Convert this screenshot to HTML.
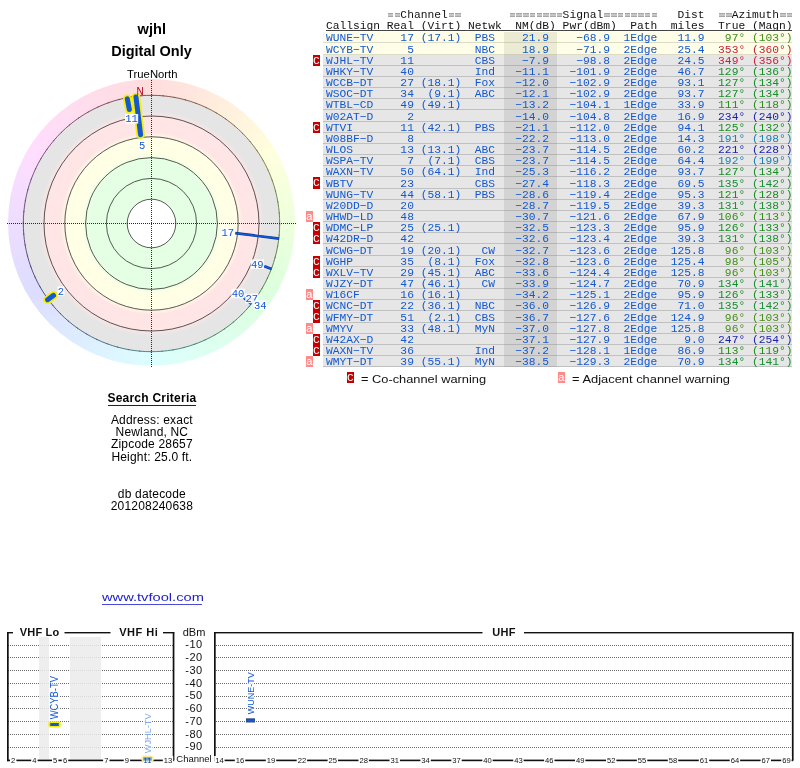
<!DOCTYPE html>
<html><head><meta charset="utf-8"><title>TV Fool</title>
<style>
html,body{margin:0;padding:0;background:#fff;}
body{width:800px;height:768px;position:relative;overflow:hidden;font-family:"Liberation Sans",sans-serif;color:#000;}
.abs{position:absolute;}
.c{position:absolute;text-align:center;white-space:nowrap;left:0;width:303px;}
.m{font-family:"Liberation Mono",monospace;font-size:11.28px;white-space:pre;letter-spacing:0;}
.row{position:absolute;left:323px;width:469px;height:11.19px;}
.t{position:absolute;left:326px;line-height:12px;color:#1358d0;}
.bd{position:absolute;width:7px;height:11px;color:#fff;font-family:"Liberation Mono",monospace;font-size:11.3px;line-height:12px;text-align:center;overflow:hidden;text-indent:-0.2px}
.bC{background:#c40000;left:313px;}
.ba{background:#ff8a8a;left:306px;}
.hd{position:absolute;left:326px;color:#111;line-height:12px;}
.hd i{font-style:normal;color:#999;font-weight:bold;}
</style></head><body><div id="wrap" style="position:absolute;left:0;top:0;width:800px;height:768px;will-change:transform;background:#fff">

<div class="c" style="top:20.2px;font-weight:bold;font-size:14.6px;line-height:18px;left:0.3px">wjhl</div>
<div class="c" style="top:42.2px;font-weight:bold;font-size:14.5px;line-height:18px;">Digital Only</div>
<div class="c" style="top:67.5px;font-size:11.3px;line-height:13px;left:0.8px">TrueNorth</div>
<div class="c" style="top:391px;font-weight:bold;font-size:12px;line-height:14px;letter-spacing:0.24px;left:0.4px">Search Criteria</div>
<div class="abs" style="left:108px;top:405px;width:88px;height:1px;background:#222"></div>
<div class="c" style="top:412.7px;font-size:12px;line-height:14px;letter-spacing:0.18px;left:0.4px">Address: exact</div>
<div class="c" style="top:425.0px;font-size:12px;line-height:14px;letter-spacing:0.18px;left:0.4px">Newland, NC</div>
<div class="c" style="top:437.3px;font-size:12px;line-height:14px;letter-spacing:0.18px;left:0.4px">Zipcode 28657</div>
<div class="c" style="top:449.6px;font-size:12px;line-height:14px;letter-spacing:0.18px;left:0.4px">Height: 25.0 ft.</div>
<div class="c" style="top:487px;font-size:12px;line-height:14px;letter-spacing:0.18px;left:0.4px">db datecode</div>
<div class="c" style="top:499.3px;font-size:12px;line-height:14px;letter-spacing:0.18px;left:0.4px">201208240638</div>
<div class="abs" style="left:102.2px;top:590.2px;font-size:11.5px;line-height:14px;color:#2020cc;white-space:nowrap;transform:scaleX(1.275);transform-origin:0 0;">www.tvfool.com</div>
<div class="abs" style="left:102px;top:604px;width:100px;height:1px;background:#4a4ad8"></div>
<div class="abs" style="left:7.9px;top:79.1px;width:287.2px;height:287.2px;border-radius:50%;background:conic-gradient(from 0deg,rgb(255,221,221) 0deg,rgb(255,229,221) 15deg,rgb(255,238,221) 30deg,rgb(255,246,221) 45deg,rgb(255,255,221) 60deg,rgb(246,255,221) 75deg,rgb(238,255,221) 90deg,rgb(229,255,221) 105deg,rgb(221,255,221) 120deg,rgb(221,255,229) 135deg,rgb(221,255,238) 150deg,rgb(221,255,246) 165deg,rgb(221,255,255) 180deg,rgb(221,246,255) 195deg,rgb(221,238,255) 210deg,rgb(221,229,255) 225deg,rgb(221,221,255) 240deg,rgb(229,221,255) 255deg,rgb(238,221,255) 270deg,rgb(246,221,255) 285deg,rgb(255,221,255) 300deg,rgb(255,221,246) 315deg,rgb(255,221,238) 330deg,rgb(255,221,229) 345deg,rgb(255,221,221) 360deg);"></div>
<div class="abs" style="left:23.0px;top:95.0px;width:257.0px;height:257.0px;border-radius:50%;background:radial-gradient(circle closest-side,#fff 0,#fff 24.3px,#e5ffe5 24.4px,#e5ffe5 63.5px,#f2ffe5 66.7px,#ffffe5 70px,#ffffe5 85.5px,#fff2e5 88.2px,#ffe5e5 91px,#ffe5e5 106.5px,#f2e5e5 109.5px,#e5e5e5 112.5px,#e5e5e5 100%);"></div>
<svg class="abs" style="left:0;top:0" width="320" height="385" viewBox="0 0 320 385">
<path d="M151.50 95.30A128.2 128.2 0 0 1 164.01 95.91" fill="none" stroke="rgb(127,66,63)" stroke-width="0.9"/>
<path d="M162.67 95.79A128.2 128.2 0 0 1 175.08 97.49" fill="none" stroke="rgb(127,72,63)" stroke-width="0.9"/>
<path d="M173.76 97.25A128.2 128.2 0 0 1 185.98 100.02" fill="none" stroke="rgb(127,77,63)" stroke-width="0.9"/>
<path d="M184.68 99.67A128.2 128.2 0 0 1 196.61 103.50" fill="none" stroke="rgb(127,82,63)" stroke-width="0.9"/>
<path d="M195.35 103.03A128.2 128.2 0 0 1 206.89 107.89" fill="none" stroke="rgb(127,87,63)" stroke-width="0.9"/>
<path d="M205.68 107.31A128.2 128.2 0 0 1 216.76 113.15" fill="none" stroke="rgb(127,93,63)" stroke-width="0.9"/>
<path d="M215.60 112.48A128.2 128.2 0 0 1 226.13 119.26" fill="none" stroke="rgb(127,98,63)" stroke-width="0.9"/>
<path d="M225.03 118.48A128.2 128.2 0 0 1 234.93 126.16" fill="none" stroke="rgb(127,103,63)" stroke-width="0.9"/>
<path d="M233.91 125.29A128.2 128.2 0 0 1 243.10 133.80" fill="none" stroke="rgb(127,109,63)" stroke-width="0.9"/>
<path d="M242.15 132.85A128.2 128.2 0 0 1 250.56 142.13" fill="none" stroke="rgb(127,114,63)" stroke-width="0.9"/>
<path d="M249.71 141.09A128.2 128.2 0 0 1 257.28 151.07" fill="none" stroke="rgb(127,119,63)" stroke-width="0.9"/>
<path d="M256.52 149.97A128.2 128.2 0 0 1 263.19 160.57" fill="none" stroke="rgb(127,125,63)" stroke-width="0.9"/>
<path d="M262.52 159.40A128.2 128.2 0 0 1 268.25 170.54" fill="none" stroke="rgb(124,127,63)" stroke-width="0.9"/>
<path d="M267.69 169.32A128.2 128.2 0 0 1 272.42 180.92" fill="none" stroke="rgb(119,127,63)" stroke-width="0.9"/>
<path d="M271.97 179.65A128.2 128.2 0 0 1 275.67 191.62" fill="none" stroke="rgb(113,127,63)" stroke-width="0.9"/>
<path d="M275.33 190.32A128.2 128.2 0 0 1 277.98 202.56" fill="none" stroke="rgb(108,127,63)" stroke-width="0.9"/>
<path d="M277.75 201.24A128.2 128.2 0 0 1 279.32 213.66" fill="none" stroke="rgb(103,127,63)" stroke-width="0.9"/>
<path d="M279.21 212.33A128.2 128.2 0 0 1 279.69 224.84" fill="none" stroke="rgb(97,127,63)" stroke-width="0.9"/>
<path d="M279.70 223.50A128.2 128.2 0 0 1 279.09 236.01" fill="none" stroke="rgb(92,127,63)" stroke-width="0.9"/>
<path d="M279.21 234.67A128.2 128.2 0 0 1 277.51 247.08" fill="none" stroke="rgb(87,127,63)" stroke-width="0.9"/>
<path d="M277.75 245.76A128.2 128.2 0 0 1 274.98 257.98" fill="none" stroke="rgb(82,127,63)" stroke-width="0.9"/>
<path d="M275.33 256.68A128.2 128.2 0 0 1 271.50 268.61" fill="none" stroke="rgb(76,127,63)" stroke-width="0.9"/>
<path d="M271.97 267.35A128.2 128.2 0 0 1 267.11 278.89" fill="none" stroke="rgb(71,127,63)" stroke-width="0.9"/>
<path d="M267.69 277.68A128.2 128.2 0 0 1 261.85 288.76" fill="none" stroke="rgb(66,127,63)" stroke-width="0.9"/>
<path d="M262.52 287.60A128.2 128.2 0 0 1 255.74 298.13" fill="none" stroke="rgb(63,127,66)" stroke-width="0.9"/>
<path d="M256.52 297.03A128.2 128.2 0 0 1 248.84 306.93" fill="none" stroke="rgb(63,127,72)" stroke-width="0.9"/>
<path d="M249.71 305.91A128.2 128.2 0 0 1 241.20 315.10" fill="none" stroke="rgb(63,127,77)" stroke-width="0.9"/>
<path d="M242.15 314.15A128.2 128.2 0 0 1 232.87 322.56" fill="none" stroke="rgb(63,127,82)" stroke-width="0.9"/>
<path d="M233.91 321.71A128.2 128.2 0 0 1 223.93 329.28" fill="none" stroke="rgb(63,127,87)" stroke-width="0.9"/>
<path d="M225.03 328.52A128.2 128.2 0 0 1 214.43 335.19" fill="none" stroke="rgb(63,127,93)" stroke-width="0.9"/>
<path d="M215.60 334.52A128.2 128.2 0 0 1 204.46 340.25" fill="none" stroke="rgb(63,127,98)" stroke-width="0.9"/>
<path d="M205.68 339.69A128.2 128.2 0 0 1 194.08 344.42" fill="none" stroke="rgb(63,127,103)" stroke-width="0.9"/>
<path d="M195.35 343.97A128.2 128.2 0 0 1 183.38 347.67" fill="none" stroke="rgb(63,127,109)" stroke-width="0.9"/>
<path d="M184.68 347.33A128.2 128.2 0 0 1 172.44 349.98" fill="none" stroke="rgb(63,127,114)" stroke-width="0.9"/>
<path d="M173.76 349.75A128.2 128.2 0 0 1 161.34 351.32" fill="none" stroke="rgb(63,127,119)" stroke-width="0.9"/>
<path d="M162.67 351.21A128.2 128.2 0 0 1 150.16 351.69" fill="none" stroke="rgb(63,127,125)" stroke-width="0.9"/>
<path d="M151.50 351.70A128.2 128.2 0 0 1 138.99 351.09" fill="none" stroke="rgb(63,124,127)" stroke-width="0.9"/>
<path d="M140.33 351.21A128.2 128.2 0 0 1 127.92 349.51" fill="none" stroke="rgb(63,119,127)" stroke-width="0.9"/>
<path d="M129.24 349.75A128.2 128.2 0 0 1 117.02 346.98" fill="none" stroke="rgb(63,113,127)" stroke-width="0.9"/>
<path d="M118.32 347.33A128.2 128.2 0 0 1 106.39 343.50" fill="none" stroke="rgb(63,108,127)" stroke-width="0.9"/>
<path d="M107.65 343.97A128.2 128.2 0 0 1 96.11 339.11" fill="none" stroke="rgb(63,103,127)" stroke-width="0.9"/>
<path d="M97.32 339.69A128.2 128.2 0 0 1 86.24 333.85" fill="none" stroke="rgb(63,97,127)" stroke-width="0.9"/>
<path d="M87.40 334.52A128.2 128.2 0 0 1 76.87 327.74" fill="none" stroke="rgb(63,92,127)" stroke-width="0.9"/>
<path d="M77.97 328.52A128.2 128.2 0 0 1 68.07 320.84" fill="none" stroke="rgb(63,87,127)" stroke-width="0.9"/>
<path d="M69.09 321.71A128.2 128.2 0 0 1 59.90 313.20" fill="none" stroke="rgb(63,82,127)" stroke-width="0.9"/>
<path d="M60.85 314.15A128.2 128.2 0 0 1 52.44 304.87" fill="none" stroke="rgb(63,76,127)" stroke-width="0.9"/>
<path d="M53.29 305.91A128.2 128.2 0 0 1 45.72 295.93" fill="none" stroke="rgb(63,71,127)" stroke-width="0.9"/>
<path d="M46.48 297.03A128.2 128.2 0 0 1 39.81 286.43" fill="none" stroke="rgb(63,66,127)" stroke-width="0.9"/>
<path d="M40.48 287.60A128.2 128.2 0 0 1 34.75 276.46" fill="none" stroke="rgb(66,63,127)" stroke-width="0.9"/>
<path d="M35.31 277.68A128.2 128.2 0 0 1 30.58 266.08" fill="none" stroke="rgb(72,63,127)" stroke-width="0.9"/>
<path d="M31.03 267.35A128.2 128.2 0 0 1 27.33 255.38" fill="none" stroke="rgb(77,63,127)" stroke-width="0.9"/>
<path d="M27.67 256.68A128.2 128.2 0 0 1 25.02 244.44" fill="none" stroke="rgb(82,63,127)" stroke-width="0.9"/>
<path d="M25.25 245.76A128.2 128.2 0 0 1 23.68 233.34" fill="none" stroke="rgb(87,63,127)" stroke-width="0.9"/>
<path d="M23.79 234.67A128.2 128.2 0 0 1 23.31 222.16" fill="none" stroke="rgb(93,63,127)" stroke-width="0.9"/>
<path d="M23.30 223.50A128.2 128.2 0 0 1 23.91 210.99" fill="none" stroke="rgb(98,63,127)" stroke-width="0.9"/>
<path d="M23.79 212.33A128.2 128.2 0 0 1 25.49 199.92" fill="none" stroke="rgb(103,63,127)" stroke-width="0.9"/>
<path d="M25.25 201.24A128.2 128.2 0 0 1 28.02 189.02" fill="none" stroke="rgb(109,63,127)" stroke-width="0.9"/>
<path d="M27.67 190.32A128.2 128.2 0 0 1 31.50 178.39" fill="none" stroke="rgb(114,63,127)" stroke-width="0.9"/>
<path d="M31.03 179.65A128.2 128.2 0 0 1 35.89 168.11" fill="none" stroke="rgb(119,63,127)" stroke-width="0.9"/>
<path d="M35.31 169.32A128.2 128.2 0 0 1 41.15 158.24" fill="none" stroke="rgb(125,63,127)" stroke-width="0.9"/>
<path d="M40.48 159.40A128.2 128.2 0 0 1 47.26 148.87" fill="none" stroke="rgb(127,63,124)" stroke-width="0.9"/>
<path d="M46.48 149.97A128.2 128.2 0 0 1 54.16 140.07" fill="none" stroke="rgb(127,63,119)" stroke-width="0.9"/>
<path d="M53.29 141.09A128.2 128.2 0 0 1 61.80 131.90" fill="none" stroke="rgb(127,63,113)" stroke-width="0.9"/>
<path d="M60.85 132.85A128.2 128.2 0 0 1 70.13 124.44" fill="none" stroke="rgb(127,63,108)" stroke-width="0.9"/>
<path d="M69.09 125.29A128.2 128.2 0 0 1 79.07 117.72" fill="none" stroke="rgb(127,63,103)" stroke-width="0.9"/>
<path d="M77.97 118.48A128.2 128.2 0 0 1 88.57 111.81" fill="none" stroke="rgb(127,63,97)" stroke-width="0.9"/>
<path d="M87.40 112.48A128.2 128.2 0 0 1 98.54 106.75" fill="none" stroke="rgb(127,63,92)" stroke-width="0.9"/>
<path d="M97.32 107.31A128.2 128.2 0 0 1 108.92 102.58" fill="none" stroke="rgb(127,63,87)" stroke-width="0.9"/>
<path d="M107.65 103.03A128.2 128.2 0 0 1 119.62 99.33" fill="none" stroke="rgb(127,63,82)" stroke-width="0.9"/>
<path d="M118.32 99.67A128.2 128.2 0 0 1 130.56 97.02" fill="none" stroke="rgb(127,63,76)" stroke-width="0.9"/>
<path d="M129.24 97.25A128.2 128.2 0 0 1 141.66 95.68" fill="none" stroke="rgb(127,63,71)" stroke-width="0.9"/>
<path d="M140.33 95.79A128.2 128.2 0 0 1 152.84 95.31" fill="none" stroke="rgb(127,63,66)" stroke-width="0.9"/>
<circle cx="151.5" cy="223.5" r="24.3" fill="none" stroke="#222" stroke-width="0.75"/>
<circle cx="151.5" cy="223.5" r="45.1" fill="none" stroke="#222" stroke-width="0.75"/>
<circle cx="151.5" cy="223.5" r="65.9" fill="none" stroke="#222" stroke-width="0.75"/>
<circle cx="151.5" cy="223.5" r="86.7" fill="none" stroke="#222" stroke-width="0.75"/>
<circle cx="151.5" cy="223.5" r="107.5" fill="none" stroke="#222" stroke-width="0.75"/>
<line x1="7" y1="223.5" x2="296" y2="223.5" stroke="#2a2a2a" stroke-width="1" stroke-dasharray="1 1" shape-rendering="crispEdges"/>
<line x1="151.5" y1="80" x2="151.5" y2="367" stroke="#2a2a2a" stroke-width="1" stroke-dasharray="1 1" shape-rendering="crispEdges"/>
<line x1="279.14" y1="238.57" x2="235.29" y2="233.19" stroke="#0a3a9a" stroke-width="2.7"/>
<line x1="279.14" y1="238.57" x2="235.29" y2="233.19" stroke="#1458d6" stroke-width="1.6"/>
<line x1="251.44" y1="303.83" x2="243.78" y2="297.63" stroke="#0a3a9a" stroke-width="2.7"/>
<line x1="251.44" y1="303.83" x2="243.78" y2="297.63" stroke="#1458d6" stroke-width="1.6"/>
<line x1="254.20" y1="300.29" x2="247.08" y2="294.93" stroke="#0a3a9a" stroke-width="2.7"/>
<line x1="254.20" y1="300.29" x2="247.08" y2="294.93" stroke="#1458d6" stroke-width="1.6"/>
<line x1="254.20" y1="300.29" x2="247.16" y2="294.99" stroke="#0a3a9a" stroke-width="2.7"/>
<line x1="254.20" y1="300.29" x2="247.16" y2="294.99" stroke="#1458d6" stroke-width="1.6"/>
<line x1="271.56" y1="268.99" x2="264.40" y2="266.24" stroke="#0a3a9a" stroke-width="2.7"/>
<line x1="271.56" y1="268.99" x2="264.40" y2="266.24" stroke="#1458d6" stroke-width="1.6"/>
<line x1="135.96" y1="96.95" x2="140.59" y2="134.67" stroke="#f6ee00" stroke-width="8.6" stroke-linecap="round"/>
<line x1="127.27" y1="98.83" x2="129.35" y2="109.53" stroke="#f6ee00" stroke-width="8.6" stroke-linecap="round"/>
<line x1="47.62" y1="299.67" x2="53.53" y2="295.38" stroke="#f6ee00" stroke-width="8.6" stroke-linecap="round"/>
<line x1="135.96" y1="96.95" x2="140.59" y2="134.67" stroke="#1458d6" stroke-width="5" stroke-linecap="round"/>
<line x1="127.27" y1="98.83" x2="129.35" y2="109.53" stroke="#1458d6" stroke-width="5" stroke-linecap="round"/>
<line x1="47.62" y1="299.67" x2="53.53" y2="295.38" stroke="#1458d6" stroke-width="5" stroke-linecap="round"/>
<rect x="221.1" y="227.4" width="13.2" height="9.6" fill="#fff" fill-opacity="0.92"/><text x="227.7" y="235.6" text-anchor="middle" font-family="Liberation Mono" font-size="10.5" fill="#1458d6">17</text>
<rect x="250.7" y="259.4" width="13.2" height="9.6" fill="#fff" fill-opacity="0.92"/><text x="257.3" y="267.6" text-anchor="middle" font-family="Liberation Mono" font-size="10.5" fill="#1458d6">49</text>
<rect x="231.4" y="288.7" width="13.2" height="9.6" fill="#fff" fill-opacity="0.92"/><text x="238.0" y="296.9" text-anchor="middle" font-family="Liberation Mono" font-size="10.5" fill="#1458d6">40</text>
<rect x="245.2" y="293.6" width="13.2" height="9.6" fill="#fff" fill-opacity="0.92"/><text x="251.8" y="301.8" text-anchor="middle" font-family="Liberation Mono" font-size="10.5" fill="#1458d6">27</text>
<rect x="253.6" y="300.4" width="13.2" height="9.6" fill="#fff" fill-opacity="0.92"/><text x="260.2" y="308.6" text-anchor="middle" font-family="Liberation Mono" font-size="10.5" fill="#1458d6">34</text>
<rect x="125.0" y="114.0" width="13.2" height="9.6" fill="#fff" fill-opacity="0.92"/><text x="131.6" y="122.2" text-anchor="middle" font-family="Liberation Mono" font-size="10.5" fill="#1458d6">11</text>
<rect x="138.6" y="141.0" width="6.9" height="9.6" fill="#fff" fill-opacity="0.92"/><text x="142.1" y="149.2" text-anchor="middle" font-family="Liberation Mono" font-size="10.5" fill="#1458d6">5</text>
<rect x="57.5" y="286.4" width="6.9" height="9.6" fill="#fff" fill-opacity="0.92"/><text x="60.9" y="294.6" text-anchor="middle" font-family="Liberation Mono" font-size="10.5" fill="#1458d6">2</text>
<text x="140" y="94.6" text-anchor="middle" font-family="Liberation Sans" font-size="10px" fill="#b0001a">N</text>
</svg>
<div class="abs" style="left:387.78px;top:13px;width:5.5px;height:4px;background:linear-gradient(#a6a6a6 0,#a6a6a6 1px,#c6c6c6 1px,#c6c6c6 3px,#a6a6a6 3px)"></div>
<div class="abs" style="left:394.55px;top:13px;width:5.5px;height:4px;background:linear-gradient(#a6a6a6 0,#a6a6a6 1px,#c6c6c6 1px,#c6c6c6 3px,#a6a6a6 3px)"></div>
<div class="abs" style="left:448.67px;top:13px;width:5.5px;height:4px;background:linear-gradient(#a6a6a6 0,#a6a6a6 1px,#c6c6c6 1px,#c6c6c6 3px,#a6a6a6 3px)"></div>
<div class="abs" style="left:455.43px;top:13px;width:5.5px;height:4px;background:linear-gradient(#a6a6a6 0,#a6a6a6 1px,#c6c6c6 1px,#c6c6c6 3px,#a6a6a6 3px)"></div>
<div class="abs" style="left:509.55px;top:13px;width:5.5px;height:4px;background:linear-gradient(#a6a6a6 0,#a6a6a6 1px,#c6c6c6 1px,#c6c6c6 3px,#a6a6a6 3px)"></div>
<div class="abs" style="left:516.32px;top:13px;width:5.5px;height:4px;background:linear-gradient(#a6a6a6 0,#a6a6a6 1px,#c6c6c6 1px,#c6c6c6 3px,#a6a6a6 3px)"></div>
<div class="abs" style="left:523.08px;top:13px;width:5.5px;height:4px;background:linear-gradient(#a6a6a6 0,#a6a6a6 1px,#c6c6c6 1px,#c6c6c6 3px,#a6a6a6 3px)"></div>
<div class="abs" style="left:529.85px;top:13px;width:5.5px;height:4px;background:linear-gradient(#a6a6a6 0,#a6a6a6 1px,#c6c6c6 1px,#c6c6c6 3px,#a6a6a6 3px)"></div>
<div class="abs" style="left:536.62px;top:13px;width:5.5px;height:4px;background:linear-gradient(#a6a6a6 0,#a6a6a6 1px,#c6c6c6 1px,#c6c6c6 3px,#a6a6a6 3px)"></div>
<div class="abs" style="left:543.38px;top:13px;width:5.5px;height:4px;background:linear-gradient(#a6a6a6 0,#a6a6a6 1px,#c6c6c6 1px,#c6c6c6 3px,#a6a6a6 3px)"></div>
<div class="abs" style="left:550.14px;top:13px;width:5.5px;height:4px;background:linear-gradient(#a6a6a6 0,#a6a6a6 1px,#c6c6c6 1px,#c6c6c6 3px,#a6a6a6 3px)"></div>
<div class="abs" style="left:556.91px;top:13px;width:5.5px;height:4px;background:linear-gradient(#a6a6a6 0,#a6a6a6 1px,#c6c6c6 1px,#c6c6c6 3px,#a6a6a6 3px)"></div>
<div class="abs" style="left:604.26px;top:13px;width:5.5px;height:4px;background:linear-gradient(#a6a6a6 0,#a6a6a6 1px,#c6c6c6 1px,#c6c6c6 3px,#a6a6a6 3px)"></div>
<div class="abs" style="left:611.03px;top:13px;width:5.5px;height:4px;background:linear-gradient(#a6a6a6 0,#a6a6a6 1px,#c6c6c6 1px,#c6c6c6 3px,#a6a6a6 3px)"></div>
<div class="abs" style="left:617.79px;top:13px;width:5.5px;height:4px;background:linear-gradient(#a6a6a6 0,#a6a6a6 1px,#c6c6c6 1px,#c6c6c6 3px,#a6a6a6 3px)"></div>
<div class="abs" style="left:624.56px;top:13px;width:5.5px;height:4px;background:linear-gradient(#a6a6a6 0,#a6a6a6 1px,#c6c6c6 1px,#c6c6c6 3px,#a6a6a6 3px)"></div>
<div class="abs" style="left:631.32px;top:13px;width:5.5px;height:4px;background:linear-gradient(#a6a6a6 0,#a6a6a6 1px,#c6c6c6 1px,#c6c6c6 3px,#a6a6a6 3px)"></div>
<div class="abs" style="left:638.09px;top:13px;width:5.5px;height:4px;background:linear-gradient(#a6a6a6 0,#a6a6a6 1px,#c6c6c6 1px,#c6c6c6 3px,#a6a6a6 3px)"></div>
<div class="abs" style="left:644.85px;top:13px;width:5.5px;height:4px;background:linear-gradient(#a6a6a6 0,#a6a6a6 1px,#c6c6c6 1px,#c6c6c6 3px,#a6a6a6 3px)"></div>
<div class="abs" style="left:651.62px;top:13px;width:5.5px;height:4px;background:linear-gradient(#a6a6a6 0,#a6a6a6 1px,#c6c6c6 1px,#c6c6c6 3px,#a6a6a6 3px)"></div>
<div class="abs" style="left:719.27px;top:13px;width:5.5px;height:4px;background:linear-gradient(#a6a6a6 0,#a6a6a6 1px,#c6c6c6 1px,#c6c6c6 3px,#a6a6a6 3px)"></div>
<div class="abs" style="left:726.03px;top:13px;width:5.5px;height:4px;background:linear-gradient(#a6a6a6 0,#a6a6a6 1px,#c6c6c6 1px,#c6c6c6 3px,#a6a6a6 3px)"></div>
<div class="abs" style="left:780.15px;top:13px;width:5.5px;height:4px;background:linear-gradient(#a6a6a6 0,#a6a6a6 1px,#c6c6c6 1px,#c6c6c6 3px,#a6a6a6 3px)"></div>
<div class="abs" style="left:786.92px;top:13px;width:5.5px;height:4px;background:linear-gradient(#a6a6a6 0,#a6a6a6 1px,#c6c6c6 1px,#c6c6c6 3px,#a6a6a6 3px)"></div>
<div class="hd m" style="top:9.4px">           Channel                 Signal           Dist    Azimuth  </div>
<div class="hd m" style="top:19.6px">Callsign Real (Virt) Netwk  NM(dB) Pwr(dBm)  Path  miles  True (Magn)</div>
<div class="abs" style="left:326px;top:30px;width:466px;height:1px;background:#444"></div>
<div class="row" style="top:32px;height:11px;background:linear-gradient(90deg,#fdfde8 181px,#ebebd3 181px,#ebebd3 234.5px,#fdfde8 234.5px);"><div class="abs" style="left:0;right:0;bottom:0;height:1px;background:linear-gradient(90deg,#dcdcc4 181px,#cfcfb8 181px,#cfcfb8 234.5px,#dcdcc4 234.5px)"></div></div>
<div class="row" style="top:43px;height:12px;background:linear-gradient(90deg,#fdfde8 181px,#ebebd3 181px,#ebebd3 234.5px,#fdfde8 234.5px);"><div class="abs" style="left:0;right:0;bottom:0;height:1px;background:linear-gradient(90deg,#dcdcc4 181px,#cfcfb8 181px,#cfcfb8 234.5px,#dcdcc4 234.5px)"></div></div>
<div class="row" style="top:55px;height:11px;background:linear-gradient(90deg,#e6e6e6 181px,#d3d3d3 181px,#d3d3d3 234.5px,#e6e6e6 234.5px);"><div class="abs" style="left:0;right:0;bottom:0;height:1px;background:linear-gradient(90deg,#c0c0c0 181px,#b4b4b4 181px,#b4b4b4 234.5px,#c0c0c0 234.5px)"></div></div>
<div class="bd bC" style="top:55px;height:11px">C</div>
<div class="row" style="top:66px;height:11px;background:linear-gradient(90deg,#e6e6e6 181px,#d3d3d3 181px,#d3d3d3 234.5px,#e6e6e6 234.5px);"><div class="abs" style="left:0;right:0;bottom:0;height:1px;background:linear-gradient(90deg,#c0c0c0 181px,#b4b4b4 181px,#b4b4b4 234.5px,#c0c0c0 234.5px)"></div></div>
<div class="row" style="top:77px;height:11px;background:linear-gradient(90deg,#e6e6e6 181px,#d3d3d3 181px,#d3d3d3 234.5px,#e6e6e6 234.5px);"><div class="abs" style="left:0;right:0;bottom:0;height:1px;background:linear-gradient(90deg,#c0c0c0 181px,#b4b4b4 181px,#b4b4b4 234.5px,#c0c0c0 234.5px)"></div></div>
<div class="row" style="top:88px;height:11px;background:linear-gradient(90deg,#e6e6e6 181px,#d3d3d3 181px,#d3d3d3 234.5px,#e6e6e6 234.5px);"><div class="abs" style="left:0;right:0;bottom:0;height:1px;background:linear-gradient(90deg,#c0c0c0 181px,#b4b4b4 181px,#b4b4b4 234.5px,#c0c0c0 234.5px)"></div></div>
<div class="row" style="top:99px;height:11px;background:linear-gradient(90deg,#e6e6e6 181px,#d3d3d3 181px,#d3d3d3 234.5px,#e6e6e6 234.5px);"><div class="abs" style="left:0;right:0;bottom:0;height:1px;background:linear-gradient(90deg,#c0c0c0 181px,#b4b4b4 181px,#b4b4b4 234.5px,#c0c0c0 234.5px)"></div></div>
<div class="row" style="top:110px;height:12px;background:linear-gradient(90deg,#e6e6e6 181px,#d3d3d3 181px,#d3d3d3 234.5px,#e6e6e6 234.5px);"><div class="abs" style="left:0;right:0;bottom:0;height:1px;background:linear-gradient(90deg,#c0c0c0 181px,#b4b4b4 181px,#b4b4b4 234.5px,#c0c0c0 234.5px)"></div></div>
<div class="row" style="top:122px;height:11px;background:linear-gradient(90deg,#e6e6e6 181px,#d3d3d3 181px,#d3d3d3 234.5px,#e6e6e6 234.5px);"><div class="abs" style="left:0;right:0;bottom:0;height:1px;background:linear-gradient(90deg,#c0c0c0 181px,#b4b4b4 181px,#b4b4b4 234.5px,#c0c0c0 234.5px)"></div></div>
<div class="bd bC" style="top:122px;height:11px">C</div>
<div class="row" style="top:133px;height:11px;background:linear-gradient(90deg,#e6e6e6 181px,#d3d3d3 181px,#d3d3d3 234.5px,#e6e6e6 234.5px);"><div class="abs" style="left:0;right:0;bottom:0;height:1px;background:linear-gradient(90deg,#c0c0c0 181px,#b4b4b4 181px,#b4b4b4 234.5px,#c0c0c0 234.5px)"></div></div>
<div class="row" style="top:144px;height:11px;background:linear-gradient(90deg,#e6e6e6 181px,#d3d3d3 181px,#d3d3d3 234.5px,#e6e6e6 234.5px);"><div class="abs" style="left:0;right:0;bottom:0;height:1px;background:linear-gradient(90deg,#c0c0c0 181px,#b4b4b4 181px,#b4b4b4 234.5px,#c0c0c0 234.5px)"></div></div>
<div class="row" style="top:155px;height:11px;background:linear-gradient(90deg,#e6e6e6 181px,#d3d3d3 181px,#d3d3d3 234.5px,#e6e6e6 234.5px);"><div class="abs" style="left:0;right:0;bottom:0;height:1px;background:linear-gradient(90deg,#c0c0c0 181px,#b4b4b4 181px,#b4b4b4 234.5px,#c0c0c0 234.5px)"></div></div>
<div class="row" style="top:166px;height:11px;background:linear-gradient(90deg,#e6e6e6 181px,#d3d3d3 181px,#d3d3d3 234.5px,#e6e6e6 234.5px);"><div class="abs" style="left:0;right:0;bottom:0;height:1px;background:linear-gradient(90deg,#c0c0c0 181px,#b4b4b4 181px,#b4b4b4 234.5px,#c0c0c0 234.5px)"></div></div>
<div class="row" style="top:177px;height:12px;background:linear-gradient(90deg,#e6e6e6 181px,#d3d3d3 181px,#d3d3d3 234.5px,#e6e6e6 234.5px);"><div class="abs" style="left:0;right:0;bottom:0;height:1px;background:linear-gradient(90deg,#c0c0c0 181px,#b4b4b4 181px,#b4b4b4 234.5px,#c0c0c0 234.5px)"></div></div>
<div class="bd bC" style="top:177px;height:12px">C</div>
<div class="row" style="top:189px;height:11px;background:linear-gradient(90deg,#e6e6e6 181px,#d3d3d3 181px,#d3d3d3 234.5px,#e6e6e6 234.5px);"><div class="abs" style="left:0;right:0;bottom:0;height:1px;background:linear-gradient(90deg,#c0c0c0 181px,#b4b4b4 181px,#b4b4b4 234.5px,#c0c0c0 234.5px)"></div></div>
<div class="row" style="top:200px;height:11px;background:linear-gradient(90deg,#e6e6e6 181px,#d3d3d3 181px,#d3d3d3 234.5px,#e6e6e6 234.5px);"><div class="abs" style="left:0;right:0;bottom:0;height:1px;background:linear-gradient(90deg,#c0c0c0 181px,#b4b4b4 181px,#b4b4b4 234.5px,#c0c0c0 234.5px)"></div></div>
<div class="row" style="top:211px;height:11px;background:linear-gradient(90deg,#e6e6e6 181px,#d3d3d3 181px,#d3d3d3 234.5px,#e6e6e6 234.5px);"><div class="abs" style="left:0;right:0;bottom:0;height:1px;background:linear-gradient(90deg,#c0c0c0 181px,#b4b4b4 181px,#b4b4b4 234.5px,#c0c0c0 234.5px)"></div></div>
<div class="bd ba" style="top:211px;height:11px">a</div>
<div class="row" style="top:222px;height:11px;background:linear-gradient(90deg,#e6e6e6 181px,#d3d3d3 181px,#d3d3d3 234.5px,#e6e6e6 234.5px);"><div class="abs" style="left:0;right:0;bottom:0;height:1px;background:linear-gradient(90deg,#c0c0c0 181px,#b4b4b4 181px,#b4b4b4 234.5px,#c0c0c0 234.5px)"></div></div>
<div class="bd bC" style="top:222px;height:11px">C</div>
<div class="row" style="top:233px;height:11px;background:linear-gradient(90deg,#e6e6e6 181px,#d3d3d3 181px,#d3d3d3 234.5px,#e6e6e6 234.5px);"><div class="abs" style="left:0;right:0;bottom:0;height:1px;background:linear-gradient(90deg,#c0c0c0 181px,#b4b4b4 181px,#b4b4b4 234.5px,#c0c0c0 234.5px)"></div></div>
<div class="bd bC" style="top:233px;height:11px">C</div>
<div class="row" style="top:244px;height:12px;background:linear-gradient(90deg,#e6e6e6 181px,#d3d3d3 181px,#d3d3d3 234.5px,#e6e6e6 234.5px);"><div class="abs" style="left:0;right:0;bottom:0;height:1px;background:linear-gradient(90deg,#c0c0c0 181px,#b4b4b4 181px,#b4b4b4 234.5px,#c0c0c0 234.5px)"></div></div>
<div class="row" style="top:256px;height:11px;background:linear-gradient(90deg,#e6e6e6 181px,#d3d3d3 181px,#d3d3d3 234.5px,#e6e6e6 234.5px);"><div class="abs" style="left:0;right:0;bottom:0;height:1px;background:linear-gradient(90deg,#c0c0c0 181px,#b4b4b4 181px,#b4b4b4 234.5px,#c0c0c0 234.5px)"></div></div>
<div class="bd bC" style="top:256px;height:11px">C</div>
<div class="row" style="top:267px;height:11px;background:linear-gradient(90deg,#e6e6e6 181px,#d3d3d3 181px,#d3d3d3 234.5px,#e6e6e6 234.5px);"><div class="abs" style="left:0;right:0;bottom:0;height:1px;background:linear-gradient(90deg,#c0c0c0 181px,#b4b4b4 181px,#b4b4b4 234.5px,#c0c0c0 234.5px)"></div></div>
<div class="bd bC" style="top:267px;height:11px">C</div>
<div class="row" style="top:278px;height:11px;background:linear-gradient(90deg,#e6e6e6 181px,#d3d3d3 181px,#d3d3d3 234.5px,#e6e6e6 234.5px);"><div class="abs" style="left:0;right:0;bottom:0;height:1px;background:linear-gradient(90deg,#c0c0c0 181px,#b4b4b4 181px,#b4b4b4 234.5px,#c0c0c0 234.5px)"></div></div>
<div class="row" style="top:289px;height:11px;background:linear-gradient(90deg,#e6e6e6 181px,#d3d3d3 181px,#d3d3d3 234.5px,#e6e6e6 234.5px);"><div class="abs" style="left:0;right:0;bottom:0;height:1px;background:linear-gradient(90deg,#c0c0c0 181px,#b4b4b4 181px,#b4b4b4 234.5px,#c0c0c0 234.5px)"></div></div>
<div class="bd ba" style="top:289px;height:11px">a</div>
<div class="row" style="top:300px;height:11px;background:linear-gradient(90deg,#e6e6e6 181px,#d3d3d3 181px,#d3d3d3 234.5px,#e6e6e6 234.5px);"><div class="abs" style="left:0;right:0;bottom:0;height:1px;background:linear-gradient(90deg,#c0c0c0 181px,#b4b4b4 181px,#b4b4b4 234.5px,#c0c0c0 234.5px)"></div></div>
<div class="bd bC" style="top:300px;height:11px">C</div>
<div class="row" style="top:311px;height:12px;background:linear-gradient(90deg,#e6e6e6 181px,#d3d3d3 181px,#d3d3d3 234.5px,#e6e6e6 234.5px);"><div class="abs" style="left:0;right:0;bottom:0;height:1px;background:linear-gradient(90deg,#c0c0c0 181px,#b4b4b4 181px,#b4b4b4 234.5px,#c0c0c0 234.5px)"></div></div>
<div class="bd bC" style="top:311px;height:12px">C</div>
<div class="row" style="top:323px;height:11px;background:linear-gradient(90deg,#e6e6e6 181px,#d3d3d3 181px,#d3d3d3 234.5px,#e6e6e6 234.5px);"><div class="abs" style="left:0;right:0;bottom:0;height:1px;background:linear-gradient(90deg,#c0c0c0 181px,#b4b4b4 181px,#b4b4b4 234.5px,#c0c0c0 234.5px)"></div></div>
<div class="bd ba" style="top:323px;height:11px">a</div>
<div class="row" style="top:334px;height:11px;background:linear-gradient(90deg,#e6e6e6 181px,#d3d3d3 181px,#d3d3d3 234.5px,#e6e6e6 234.5px);"><div class="abs" style="left:0;right:0;bottom:0;height:1px;background:linear-gradient(90deg,#c0c0c0 181px,#b4b4b4 181px,#b4b4b4 234.5px,#c0c0c0 234.5px)"></div></div>
<div class="bd bC" style="top:334px;height:11px">C</div>
<div class="row" style="top:345px;height:11px;background:linear-gradient(90deg,#e6e6e6 181px,#d3d3d3 181px,#d3d3d3 234.5px,#e6e6e6 234.5px);"><div class="abs" style="left:0;right:0;bottom:0;height:1px;background:linear-gradient(90deg,#c0c0c0 181px,#b4b4b4 181px,#b4b4b4 234.5px,#c0c0c0 234.5px)"></div></div>
<div class="bd bC" style="top:345px;height:11px">C</div>
<div class="row" style="top:356px;height:11px;background:linear-gradient(90deg,#e6e6e6 181px,#d3d3d3 181px,#d3d3d3 234.5px,#e6e6e6 234.5px);"><div class="abs" style="left:0;right:0;bottom:0;height:1px;background:linear-gradient(90deg,#c0c0c0 181px,#b4b4b4 181px,#b4b4b4 234.5px,#c0c0c0 234.5px)"></div></div>
<div class="bd ba" style="top:356px;height:11px">a</div>
<div class="t m" style="top:31.5px">WUNE−TV    17 (17.1)  PBS    21.9    −68.9  1Edge   11.9  <span style="color:#438e15"> 97° (103°)</span></div>
<div class="t m" style="top:43.5px">WCYB−TV     5         NBC    18.9    −71.9  2Edge   25.4  <span style="color:#c91e32">353° (360°)</span></div>
<div class="t m" style="top:54.5px">WJHL−TV    11         CBS    −7.9    −98.8  2Edge   24.5  <span style="color:#c91e3d">349° (356°)</span></div>
<div class="t m" style="top:65.5px">WHKY−TV    40         Ind   −11.1   −101.9  2Edge   46.7  <span style="color:#158e27">129° (136°)</span></div>
<div class="t m" style="top:76.5px">WCCB−DT    27 (18.1)  Fox   −12.0   −102.9  2Edge   93.1  <span style="color:#158e23">127° (134°)</span></div>
<div class="t m" style="top:87.5px">WSOC−DT    34  (9.1)  ABC   −12.1   −102.9  2Edge   93.7  <span style="color:#158e23">127° (134°)</span></div>
<div class="t m" style="top:98.5px">WTBL−CD    49 (49.1)        −13.2   −104.1  1Edge   33.9  <span style="color:#278e15">111° (118°)</span></div>
<div class="t m" style="top:110.5px">W02AT−D     2               −14.0   −104.8  2Edge   16.9  <span style="color:#1a1ead">234° (240°)</span></div>
<div class="t m" style="top:121.5px">WTVI       11 (42.1)  PBS   −21.1   −112.0  2Edge   94.1  <span style="color:#158e1f">125° (132°)</span></div>
<div class="t m" style="top:132.5px">W08BF−D     8               −22.2   −113.0  2Edge   14.3  <span style="color:#1a7eaf">191° (198°)</span></div>
<div class="t m" style="top:143.5px">WLOS       13 (13.1)  ABC   −23.7   −114.5  2Edge   60.2  <span style="color:#1a1ead">221° (228°)</span></div>
<div class="t m" style="top:154.5px">WSPA−TV     7  (7.1)  CBS   −23.7   −114.5  2Edge   64.4  <span style="color:#1a7eaf">192° (199°)</span></div>
<div class="t m" style="top:165.5px">WAXN−TV    50 (64.1)  Ind   −25.3   −116.2  2Edge   93.7  <span style="color:#158e23">127° (134°)</span></div>
<div class="t m" style="top:177.5px">WBTV       23         CBS   −27.4   −118.3  2Edge   69.5  <span style="color:#158e33">135° (142°)</span></div>
<div class="t m" style="top:188.5px">WUNG−TV    44 (58.1)  PBS   −28.6   −119.4  2Edge   95.3  <span style="color:#158e17">121° (128°)</span></div>
<div class="t m" style="top:199.5px">W20DD−D    20               −28.7   −119.5  2Edge   39.3  <span style="color:#158e2b">131° (138°)</span></div>
<div class="t m" style="top:210.5px">WHWD−LD    48               −30.7   −121.6  2Edge   67.9  <span style="color:#318e15">106° (113°)</span></div>
<div class="t m" style="top:221.5px">WDMC−LP    25 (25.1)        −32.5   −123.3  2Edge   95.9  <span style="color:#158e21">126° (133°)</span></div>
<div class="t m" style="top:232.5px">W42DR−D    42               −32.6   −123.4  2Edge   39.3  <span style="color:#158e2b">131° (138°)</span></div>
<div class="t m" style="top:244.5px">WCWG−DT    19 (20.1)   CW   −32.7   −123.6  2Edge  125.8  <span style="color:#458e15"> 96° (103°)</span></div>
<div class="t m" style="top:255.5px">WGHP       35  (8.1)  Fox   −32.8   −123.6  2Edge  125.4  <span style="color:#418e15"> 98° (105°)</span></div>
<div class="t m" style="top:266.5px">WXLV−TV    29 (45.1)  ABC   −33.6   −124.4  2Edge  125.8  <span style="color:#458e15"> 96° (103°)</span></div>
<div class="t m" style="top:277.5px">WJZY−DT    47 (46.1)   CW   −33.9   −124.7  2Edge   70.9  <span style="color:#158e31">134° (141°)</span></div>
<div class="t m" style="top:288.5px">W16CF      16 (16.1)        −34.2   −125.1  2Edge   95.9  <span style="color:#158e21">126° (133°)</span></div>
<div class="t m" style="top:299.5px">WCNC−DT    22 (36.1)  NBC   −36.0   −126.9  2Edge   71.0  <span style="color:#158e33">135° (142°)</span></div>
<div class="t m" style="top:311.5px">WFMY−DT    51  (2.1)  CBS   −36.7   −127.6  2Edge  124.9  <span style="color:#458e15"> 96° (103°)</span></div>
<div class="t m" style="top:322.5px">WMYV       33 (48.1)  MyN   −37.0   −127.8  2Edge  125.8  <span style="color:#458e15"> 96° (103°)</span></div>
<div class="t m" style="top:333.5px">W42AX−D    42               −37.1   −127.9  1Edge    9.0  <span style="color:#1a1ead">247° (254°)</span></div>
<div class="t m" style="top:344.5px">WAXN−TV    36         Ind   −37.2   −128.1  1Edge   86.9  <span style="color:#238e15">113° (119°)</span></div>
<div class="t m" style="top:355.5px">WMYT−DT    39 (55.1)  MyN   −38.5   −129.3  2Edge   70.9  <span style="color:#158e31">134° (141°)</span></div>
<div class="bd bC" style="left:347px;top:372px;height:11px">C</div>
<div class="abs" style="left:361px;top:372.2px;font-size:11px;line-height:14px;white-space:nowrap;color:#111;transform:scaleX(1.165);transform-origin:0 0;">= Co-channel warning</div>
<div class="bd ba" style="left:558px;top:372px;height:11px">a</div>
<div class="abs" style="left:571.8px;top:372.2px;font-size:11px;line-height:14px;white-space:nowrap;color:#111;transform:scaleX(1.172);transform-origin:0 0;">= Adjacent channel warning</div>
<svg class="abs" style="left:0;top:620px" width="800" height="148" viewBox="0 620 800 148" font-family="Liberation Sans">
<line x1="8" y1="645.5" x2="173" y2="645.5" stroke="#6c6c6c" stroke-dasharray="1 1" shape-rendering="crispEdges"/>
<line x1="216" y1="645.5" x2="792" y2="645.5" stroke="#6c6c6c" stroke-dasharray="1 1" shape-rendering="crispEdges"/>
<text x="194" y="648.3" text-anchor="middle" font-size="11px" fill="#111" letter-spacing="0.5">-10</text>
<line x1="8" y1="657.5" x2="173" y2="657.5" stroke="#6c6c6c" stroke-dasharray="1 1" shape-rendering="crispEdges"/>
<line x1="216" y1="657.5" x2="792" y2="657.5" stroke="#6c6c6c" stroke-dasharray="1 1" shape-rendering="crispEdges"/>
<text x="194" y="661.0" text-anchor="middle" font-size="11px" fill="#111" letter-spacing="0.5">-20</text>
<line x1="8" y1="670.5" x2="173" y2="670.5" stroke="#6c6c6c" stroke-dasharray="1 1" shape-rendering="crispEdges"/>
<line x1="216" y1="670.5" x2="792" y2="670.5" stroke="#6c6c6c" stroke-dasharray="1 1" shape-rendering="crispEdges"/>
<text x="194" y="673.8" text-anchor="middle" font-size="11px" fill="#111" letter-spacing="0.5">-30</text>
<line x1="8" y1="683.5" x2="173" y2="683.5" stroke="#6c6c6c" stroke-dasharray="1 1" shape-rendering="crispEdges"/>
<line x1="216" y1="683.5" x2="792" y2="683.5" stroke="#6c6c6c" stroke-dasharray="1 1" shape-rendering="crispEdges"/>
<text x="194" y="686.5" text-anchor="middle" font-size="11px" fill="#111" letter-spacing="0.5">-40</text>
<line x1="8" y1="696.5" x2="173" y2="696.5" stroke="#6c6c6c" stroke-dasharray="1 1" shape-rendering="crispEdges"/>
<line x1="216" y1="696.5" x2="792" y2="696.5" stroke="#6c6c6c" stroke-dasharray="1 1" shape-rendering="crispEdges"/>
<text x="194" y="699.3" text-anchor="middle" font-size="11px" fill="#111" letter-spacing="0.5">-50</text>
<line x1="8" y1="708.5" x2="173" y2="708.5" stroke="#6c6c6c" stroke-dasharray="1 1" shape-rendering="crispEdges"/>
<line x1="216" y1="708.5" x2="792" y2="708.5" stroke="#6c6c6c" stroke-dasharray="1 1" shape-rendering="crispEdges"/>
<text x="194" y="712.0" text-anchor="middle" font-size="11px" fill="#111" letter-spacing="0.5">-60</text>
<line x1="8" y1="721.5" x2="173" y2="721.5" stroke="#6c6c6c" stroke-dasharray="1 1" shape-rendering="crispEdges"/>
<line x1="216" y1="721.5" x2="792" y2="721.5" stroke="#6c6c6c" stroke-dasharray="1 1" shape-rendering="crispEdges"/>
<text x="194" y="724.8" text-anchor="middle" font-size="11px" fill="#111" letter-spacing="0.5">-70</text>
<line x1="8" y1="734.5" x2="173" y2="734.5" stroke="#6c6c6c" stroke-dasharray="1 1" shape-rendering="crispEdges"/>
<line x1="216" y1="734.5" x2="792" y2="734.5" stroke="#6c6c6c" stroke-dasharray="1 1" shape-rendering="crispEdges"/>
<text x="194" y="737.5" text-anchor="middle" font-size="11px" fill="#111" letter-spacing="0.5">-80</text>
<line x1="8" y1="747.5" x2="173" y2="747.5" stroke="#6c6c6c" stroke-dasharray="1 1" shape-rendering="crispEdges"/>
<line x1="216" y1="747.5" x2="792" y2="747.5" stroke="#6c6c6c" stroke-dasharray="1 1" shape-rendering="crispEdges"/>
<text x="194" y="750.3" text-anchor="middle" font-size="11px" fill="#111" letter-spacing="0.5">-90</text>
<rect x="39" y="637" width="10" height="122.5" fill="#ebebeb" fill-opacity="0.86"/>
<rect x="70" y="637" width="31" height="122.5" fill="#ebebeb" fill-opacity="0.86"/>
<text x="194" y="635.8" text-anchor="middle" font-size="11px" fill="#111">dBm</text>
<text x="194" y="761.6" text-anchor="middle" font-size="9.5px" fill="#111">Channel</text>
<rect x="7.00" y="632.00" width="1.70" height="129.20" fill="#111"/>
<rect x="172.70" y="632.00" width="1.70" height="128.00" fill="#111"/>
<rect x="7.00" y="632.00" width="6.00" height="1.40" fill="#111"/>
<rect x="64.50" y="632.00" width="46.00" height="1.40" fill="#111"/>
<rect x="163.00" y="632.00" width="11.20" height="1.40" fill="#111"/>
<rect x="7.00" y="759.60" width="167.20" height="1.60" fill="#111"/>
<rect x="214.00" y="632.00" width="1.70" height="129.20" fill="#111"/>
<rect x="791.90" y="632.00" width="1.70" height="128.00" fill="#111"/>
<rect x="214.00" y="632.00" width="268.50" height="1.40" fill="#111"/>
<rect x="524.00" y="632.00" width="269.40" height="1.40" fill="#111"/>
<rect x="214.00" y="759.60" width="579.40" height="1.60" fill="#111"/>
<text x="39.6" y="635.6" text-anchor="middle" font-size="11px" font-weight="bold" fill="#111" letter-spacing="0.2">VHF Lo</text>
<text x="138.8" y="635.6" text-anchor="middle" font-size="11px" font-weight="bold" fill="#111" letter-spacing="0.5">VHF Hi</text>
<text x="503.9" y="635.6" text-anchor="middle" font-size="11px" font-weight="bold" fill="#111" letter-spacing="0.3">UHF</text>
<rect x="10.0" y="756" width="6.4" height="8" fill="#fff"/><text x="13.2" y="763.2" text-anchor="middle" font-size="7.6px" fill="#111">2</text>
<rect x="31.2" y="756" width="6.4" height="8" fill="#fff"/><text x="34.4" y="763.2" text-anchor="middle" font-size="7.6px" fill="#111">4</text>
<rect x="52.0" y="756" width="6.4" height="8" fill="#fff"/><text x="55.2" y="763.2" text-anchor="middle" font-size="7.6px" fill="#111">5</text>
<rect x="61.8" y="756" width="6.4" height="8" fill="#fff"/><text x="65.0" y="763.2" text-anchor="middle" font-size="7.6px" fill="#111">6</text>
<rect x="103.1" y="756" width="6.4" height="8" fill="#fff"/><text x="106.3" y="763.2" text-anchor="middle" font-size="7.6px" fill="#111">7</text>
<rect x="123.7" y="756" width="6.4" height="8" fill="#fff"/><text x="126.9" y="763.2" text-anchor="middle" font-size="7.6px" fill="#111">9</text>
<rect x="162.8" y="756" width="10.4" height="8" fill="#fff"/><text x="168.0" y="763.2" text-anchor="middle" font-size="7.6px" fill="#111">13</text>
<rect x="234.8" y="756" width="10.4" height="8" fill="#fff"/><text x="240.0" y="763.2" text-anchor="middle" font-size="7.6px" fill="#111">16</text>
<rect x="265.8" y="756" width="10.4" height="8" fill="#fff"/><text x="270.9" y="763.2" text-anchor="middle" font-size="7.6px" fill="#111">19</text>
<rect x="296.7" y="756" width="10.4" height="8" fill="#fff"/><text x="301.9" y="763.2" text-anchor="middle" font-size="7.6px" fill="#111">22</text>
<rect x="327.6" y="756" width="10.4" height="8" fill="#fff"/><text x="332.8" y="763.2" text-anchor="middle" font-size="7.6px" fill="#111">25</text>
<rect x="358.5" y="756" width="10.4" height="8" fill="#fff"/><text x="363.7" y="763.2" text-anchor="middle" font-size="7.6px" fill="#111">28</text>
<rect x="389.5" y="756" width="10.4" height="8" fill="#fff"/><text x="394.7" y="763.2" text-anchor="middle" font-size="7.6px" fill="#111">31</text>
<rect x="420.4" y="756" width="10.4" height="8" fill="#fff"/><text x="425.6" y="763.2" text-anchor="middle" font-size="7.6px" fill="#111">34</text>
<rect x="451.3" y="756" width="10.4" height="8" fill="#fff"/><text x="456.5" y="763.2" text-anchor="middle" font-size="7.6px" fill="#111">37</text>
<rect x="482.3" y="756" width="10.4" height="8" fill="#fff"/><text x="487.5" y="763.2" text-anchor="middle" font-size="7.6px" fill="#111">40</text>
<rect x="513.2" y="756" width="10.4" height="8" fill="#fff"/><text x="518.4" y="763.2" text-anchor="middle" font-size="7.6px" fill="#111">43</text>
<rect x="544.1" y="756" width="10.4" height="8" fill="#fff"/><text x="549.3" y="763.2" text-anchor="middle" font-size="7.6px" fill="#111">46</text>
<rect x="575.0" y="756" width="10.4" height="8" fill="#fff"/><text x="580.2" y="763.2" text-anchor="middle" font-size="7.6px" fill="#111">49</text>
<rect x="606.0" y="756" width="10.4" height="8" fill="#fff"/><text x="611.2" y="763.2" text-anchor="middle" font-size="7.6px" fill="#111">52</text>
<rect x="636.9" y="756" width="10.4" height="8" fill="#fff"/><text x="642.1" y="763.2" text-anchor="middle" font-size="7.6px" fill="#111">55</text>
<rect x="667.8" y="756" width="10.4" height="8" fill="#fff"/><text x="673.0" y="763.2" text-anchor="middle" font-size="7.6px" fill="#111">58</text>
<rect x="698.8" y="756" width="10.4" height="8" fill="#fff"/><text x="704.0" y="763.2" text-anchor="middle" font-size="7.6px" fill="#111">61</text>
<rect x="729.7" y="756" width="10.4" height="8" fill="#fff"/><text x="734.9" y="763.2" text-anchor="middle" font-size="7.6px" fill="#111">64</text>
<rect x="760.6" y="756" width="10.4" height="8" fill="#fff"/><text x="765.8" y="763.2" text-anchor="middle" font-size="7.6px" fill="#111">67</text>
<rect x="214.2" y="756" width="10.4" height="8" fill="#fff"/><text x="219.4" y="763.2" text-anchor="middle" font-size="7.6px" fill="#111">14</text>
<rect x="781.2" y="756" width="10.4" height="8" fill="#fff"/><text x="786.5" y="763.2" text-anchor="middle" font-size="7.6px" fill="#111">69</text>
<rect x="48.3" y="721.3" width="12.5" height="6.3" rx="2.6" fill="#f6ee00"/>
<rect x="50.2" y="723" width="8.6" height="3" fill="#1458d6"/>
<text transform="translate(58.4,719.3) rotate(-90)" font-size="10.2px" stroke="#fff" stroke-width="2.2" stroke-opacity="0.85" fill="none" textLength="43.2" lengthAdjust="spacingAndGlyphs">WCYB-TV</text><text transform="translate(58.4,719.3) rotate(-90)" font-size="10.2px" fill="#1458d6" textLength="43.2" lengthAdjust="spacingAndGlyphs">WCYB-TV</text>
<rect x="141.4" y="755.4" width="12.4" height="6.6" rx="2.8" fill="#f4f09a"/>
<rect x="143.2" y="757.2" width="8.6" height="3.4" fill="#6f9de2"/>
<text x="147.5" y="763.2" text-anchor="middle" font-size="7.6px" fill="#1c3c78">11</text>
<text transform="translate(151.0,753.2) rotate(-90)" font-size="9.8px" stroke="#fff" stroke-width="2.2" stroke-opacity="0.85" fill="none" textLength="39.8" lengthAdjust="spacingAndGlyphs">WJHL-TV</text><text transform="translate(151.0,753.2) rotate(-90)" font-size="9.8px" fill="#80abea" textLength="39.8" lengthAdjust="spacingAndGlyphs">WJHL-TV</text>
<rect x="246" y="718.6" width="8.9" height="3.9" fill="#3a4a6a"/>
<rect x="246" y="718.6" width="8.9" height="1" fill="#0a3a9a"/>
<rect x="246.4" y="719.4" width="8.1" height="2.3" fill="#1458d6"/>
<text transform="translate(254.1,714.3) rotate(-90)" font-size="9.7px" stroke="#fff" stroke-width="2.2" stroke-opacity="0.85" fill="none" textLength="42.0" lengthAdjust="spacingAndGlyphs">WUNE-TV</text><text transform="translate(254.1,714.3) rotate(-90)" font-size="9.7px" fill="#1458d6" textLength="42.0" lengthAdjust="spacingAndGlyphs">WUNE-TV</text>
</svg>
</div></body></html>
